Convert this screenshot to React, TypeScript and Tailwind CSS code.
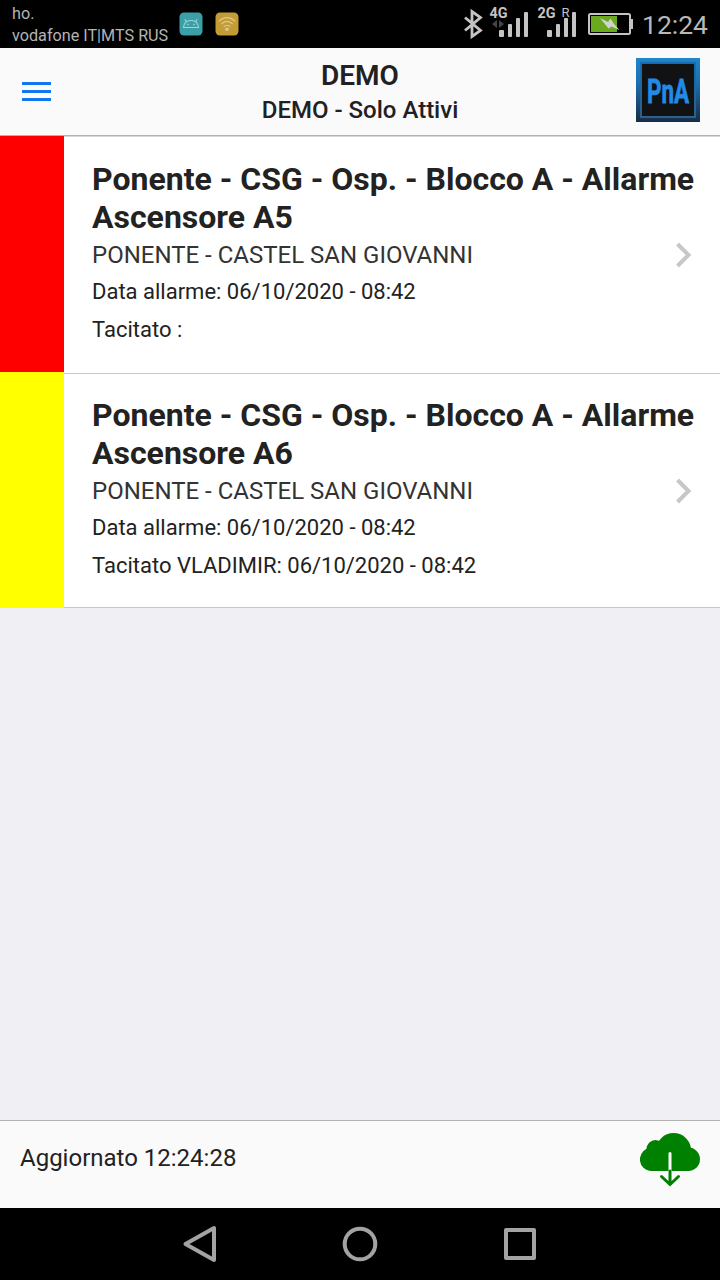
import React from "react";

type Alarm = {
  id: string;
  color: string;
  divider: string;
  title: string;
  site: string;
  date: string;
  silenced: string;
};

const alarms: Alarm[] = [
  {
    id: "a5",
    color: "bg-[#ff0000]",
    divider: "shadow-[inset_0_1px_#d8d8d8]",
    title: "Ponente - CSG - Osp. - Blocco A - Allarme Ascensore A5",
    site: "PONENTE - CASTEL SAN GIOVANNI",
    date: "Data allarme: 06/10/2020 - 08:42",
    silenced: "Tacitato :",
  },
  {
    id: "a6",
    color: "bg-[#ffff00]",
    divider: "border-b border-[#c8c7cc] shadow-[inset_0_1px_#ffffff,inset_0_2px_#c8c7cc]",
    title: "Ponente - CSG - Osp. - Blocco A - Allarme Ascensore A6",
    site: "PONENTE - CASTEL SAN GIOVANNI",
    date: "Data allarme: 06/10/2020 - 08:42",
    silenced: "Tacitato VLADIMIR: 06/10/2020 - 08:42",
  },
];

function StatusBar() {
  return (
    <div className="flex h-12 shrink-0 items-start bg-black text-[#b4b4b4]">
      <div className="ml-3 w-[168px] whitespace-nowrap pt-[3px] text-[16.2px] leading-[22px]">
        <div>ho.</div>
        <div>vodafone IT|MTS RUS</div>
      </div>
      <svg className="-ml-px mt-3 h-6 w-6" viewBox="0 0 24 24" fill="none">
        <rect x="0.5" y="0.5" width="23" height="23" rx="4.5" fill="#3a9fa6" />
        <path d="M4.500 15.500c.4-4.200 3-7 7.500-7s7.100 2.800 7.500 7zM7.300 9.800 5.800 7.300M16.700 9.800l1.500-2.500" stroke="#a6d2d4" strokeWidth="1.200" />
        <path d="M8.300 12.500h1.400M14.300 12.500h1.400" stroke="#a6d2d4" strokeWidth="1.400" />
      </svg>
      <svg className="ml-3 mt-3 h-6 w-6" viewBox="0 0 24 24" fill="none">
        <rect x="0.5" y="0.5" width="23" height="23" rx="4.500" fill="#c49c35" />
        <path d="M4 9.500c4.500-5.200 11.500-5.200 16 0M6.300 12.200c3.300-3.700 8.100-3.700 11.400 0M8.700 14.800c2-2.100 4.600-2.100 6.600 0" stroke="#e0c98f" strokeWidth="1.200" />
        <circle cx="12" cy="17.300" r="1.800" fill="#e0c98f" />
      </svg>
      <svg className="ml-auto h-12 w-[176px]" viewBox="460 0 176 48" fill="none">
        <path d="m465 17.500 15.500 13-8.500 6v-25l8.500 6-15.500 13" stroke="#c4c4c4" strokeWidth="2.800" />
        <text x="489.500" y="18" fill="#c4c4c4" fontSize="14" fontWeight="700" textLength="18" lengthAdjust="spacingAndGlyphs">4G</text>
        <path d="M497 20v8l-5-4zM499 20v8l5-4z" fill="#454545" />
        <g fill="#c4c4c4">
          <rect x="499" y="30" width="5" height="7" rx="1" />
          <rect x="508" y="24" width="4" height="13" rx="1" />
          <rect x="516" y="18" width="4" height="19" rx="1" />
          <rect x="524" y="12" width="4" height="25" rx="1" />
          <rect x="547" y="30" width="5" height="7" rx="1" />
          <rect x="556" y="24" width="4" height="13" rx="1" />
          <rect x="564" y="18" width="4" height="19" rx="1" />
          <rect x="572" y="12" width="4" height="25" rx="1" />
        </g>
        <text x="537.500" y="18" fill="#c4c4c4" fontSize="14" fontWeight="700" textLength="18" lengthAdjust="spacingAndGlyphs">2G</text>
        <text x="561.500" y="16.500" fill="#c0c0c0" fontSize="13">R</text>
        <rect x="589" y="14" width="41" height="20" rx="1.500" stroke="#c4c4c4" strokeWidth="2" />
        <path d="M631 19h2v10h-2z" fill="#c4c4c4" />
        <rect x="591" y="16" width="26" height="16" fill="#6aaa1e" />
        <path d="m600 18 8 4 2.500-3.500 3.500 5.500 5.500 6-8-3.500-3 2z" fill="#d2d2d2" />
      </svg>
      <div className="ml-[6px] mr-3 whitespace-nowrap pt-[9px] text-[26.500px] leading-8 text-[#b8b8b8]">12:24</div>
    </div>
  );
}

function Header() {
  return (
    <header className="flex h-[88px] shrink-0 items-start justify-between border-b border-[#b2b2b2] bg-[#fafafa]">
      <button aria-label="Menu" className="ml-[22px] mt-[34px] flex w-[78px] flex-col gap-[5px]">
        <span className="h-[3px] w-[29px] bg-[#1277ee]" />
        <span className="h-[3px] w-[29px] bg-[#1277ee]" />
        <span className="h-[3px] w-[29px] bg-[#1277ee]" />
      </button>
      <div className="pt-[11px] text-center text-[#212121]">
        <h1 className="text-[28px] font-semibold leading-[34px]">DEMO</h1>
        <h2 className="text-[24px] font-medium leading-[34px]">DEMO - Solo Attivi</h2>
      </div>
      <div className="mr-5 flex w-20 justify-end pt-[10px]">
        <svg className="h-16 w-16 overflow-visible" viewBox="0 0 64 64">
          <defs>
            <linearGradient id="frame" x1="0" y1="0" x2="0" y2="1">
              <stop offset="0" stopColor="#2184cc" />
              <stop offset="0.400" stopColor="#1c6eae" />
              <stop offset="1" stopColor="#152c46" />
            </linearGradient>
            <linearGradient id="bevel" x1="0" y1="0" x2="0" y2="1">
              <stop offset="0" stopColor="#176caf" />
              <stop offset="1" stopColor="#2f5e88" />
            </linearGradient>
          </defs>
          <path d="M0 0h64v64H0z" fill="url(#frame)" />
          <path d="M4 4h56v56H4z" fill="url(#bevel)" />
          <path d="M6 6h52v52H6z" fill="#101214" />
          <text x="11" y="45" fontSize="34" fontWeight="700" fill="#238ae6" stroke="#238ae6" strokeWidth="0.800" textLength="42" lengthAdjust="spacingAndGlyphs">PnA</text>
        </svg>
      </div>
    </header>
  );
}

function AlarmRow({ alarm }: { alarm: Alarm }) {
  return (
    <li className="flex h-[236px]">
      <div className={`w-16 shrink-0 ${alarm.color}`} />
      <div className={`flex min-w-0 flex-1 items-center bg-white pl-7 ${alarm.divider}`}>
        <div className="h-full w-[584px] shrink-0 pt-6 text-[#222222]">
          <h3 className="w-[612px] text-[32px] font-bold leading-[38px]">{alarm.title}</h3>
          <p className="text-[24px] leading-[38px] text-[#333333]">{alarm.site}</p>
          <p className="text-[22px] leading-[36px]">{alarm.date}</p>
          <p className="mt-px text-[22px] leading-[38px]">{alarm.silenced}</p>
        </div>
        <svg className="mt-0.5 h-[26px] w-4 shrink-0" viewBox="0 0 16 26" fill="none">
          <path d="m1.500 2 11 11-11 11" stroke="#c7c7c7" strokeWidth="4" />
        </svg>
      </div>
    </li>
  );
}

function Footer() {
  return (
    <footer className="flex h-[88px] shrink-0 items-start justify-between border-t border-[#b2b2b2] bg-[#fafafa] px-5">
      <p className="pt-5 text-[24px] leading-[34px] text-[#222222]">Aggiornato 12:24:28</p>
      <svg className="mt-3 h-[54px] w-[60px]" viewBox="0 0 60 54" fill="none">
        <g fill="#008000">
          <circle cx="33.600" cy="17.500" r="17.500" />
          <circle cx="15.500" cy="16" r="9" />
          <circle cx="11.500" cy="26.400" r="11.600" />
          <circle cx="48.300" cy="26.300" r="11.700" />
          <path d="M11.500 19h37v19h-37z" />
        </g>
        <path d="M30 20.500V38" stroke="#fafafa" strokeWidth="3" strokeLinecap="round" />
        <path d="M30 38v12.500M21.500 43.500 30 51.500l8.500-8" stroke="#008000" strokeWidth="3" strokeLinecap="round" />
      </svg>
    </footer>
  );
}

function NavigationBar() {
  return (
    <nav className="flex h-[72px] shrink-0 items-center justify-center gap-[120px] bg-black text-[#a3a3a3]">
      <svg className="h-10 w-10" viewBox="0 0 40 40" fill="none" stroke="currentColor" strokeWidth="4" strokeLinejoin="round">
        <path d="M34 4v32L5.500 20z" />
      </svg>
      <svg className="h-10 w-10" viewBox="0 0 40 40" fill="none" stroke="currentColor" strokeWidth="4">
        <circle cx="20" cy="20" r="15.300" />
      </svg>
      <svg className="h-10 w-10" viewBox="0 0 40 40" fill="none" stroke="currentColor" strokeWidth="4" strokeLinejoin="round">
        <path d="M6 6h28v28H6z" />
      </svg>
    </nav>
  );
}

export default function App() {
  return (
    <div className="flex h-[1280px] w-[720px] flex-col overflow-hidden bg-[#efeff4] font-['Roboto',sans-serif]">
      <StatusBar />
      <Header />
      <main className="flex-1">
        <ul>
          {alarms.map((alarm) => (
            <AlarmRow key={alarm.id} alarm={alarm} />
          ))}
        </ul>
      </main>
      <Footer />
      <NavigationBar />
    </div>
  );
}
